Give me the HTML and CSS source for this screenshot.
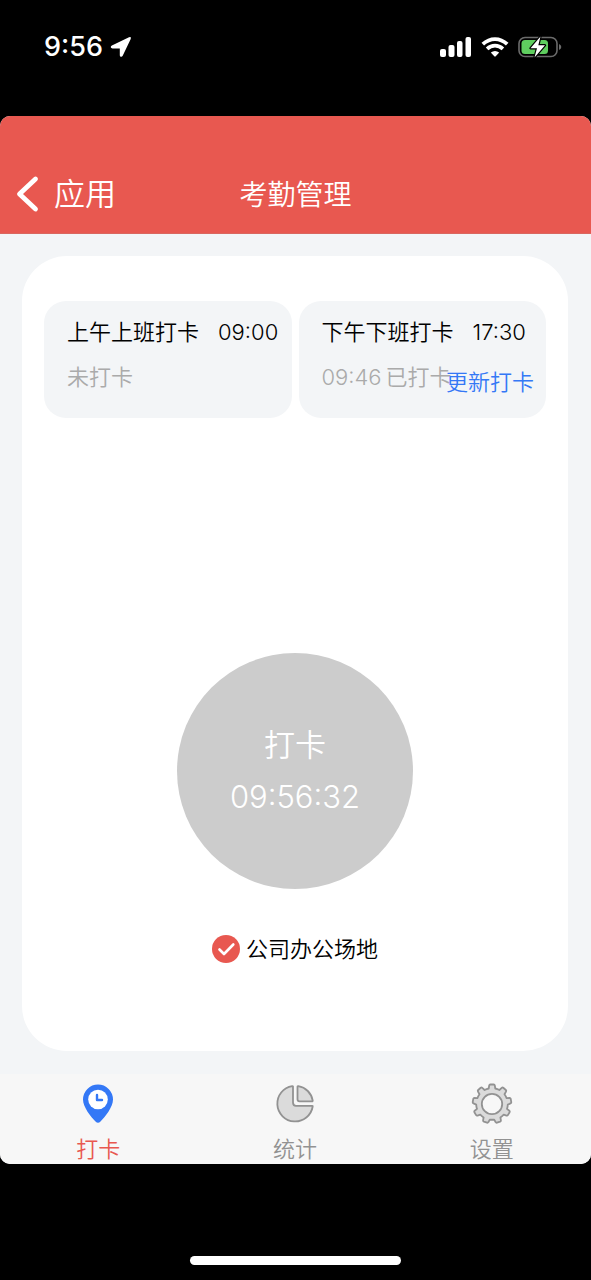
FILE: index.html
```html
<!DOCTYPE html>
<html lang="zh-CN">
<head>
<meta charset="utf-8">
<meta name="viewport" content="width=device-width, initial-scale=1">
<title>考勤管理</title>
<link rel="stylesheet" href="styles.css">
</head>
<body class="phone">
<div class="status">
  <div class="status-left">
    <span class="status-time">9:56</span>
    <svg width="22" height="22" viewBox="0 0 22 22" aria-hidden="true"><path d="M19 1.200Q21.600 .2 20.700 2.900L12.700 19.800Q11.900 21.200 10.700 20.700Q9.800 20.300 9.800 19.200V12.400H2.500Q1 12.300 .8 11.200Q.6 10.100 1.900 9.400z" fill="#fff"/></svg>
  </div>
  <div class="status-right">
    <svg width="32" height="20" viewBox="0 0 32 20" aria-hidden="true" fill="#fff"><rect x="0" y="12" width="6" height="8" rx="2"/><rect x="8.500" y="8" width="6" height="12" rx="2"/><rect x="17" y="4" width="5.500" height="16" rx="2"/><rect x="25.500" y="0" width="5.500" height="20" rx="2"/></svg>
    <svg width="28" height="20" viewBox="0 0 28 20" aria-hidden="true"><g fill="none" stroke="#fff" stroke-width="3.800"><path d="M1.800 7.200Q7.300 2.100 14 2.100T26.200 7.200"/><path d="M6.100 11.800Q9.600 8.600 14 8.600T21.900 11.800"/></g><path d="M9.800 15.600Q14 12.200 18.200 15.600L14.700 19.300Q14 20 13.300 19.300z" fill="#fff"/></svg>
    <svg width="44" height="24" viewBox="0 0 44 24" aria-hidden="true"><rect x="1" y="2.500" width="38" height="19" rx="6" fill="none" stroke="#6b6b6b" stroke-width="1.600"/><path d="M41 9Q43.300 10 43.300 12T41 15z" fill="#6b6b6b"/><rect x="3.500" y="5" width="26.500" height="14" rx="3.500" fill="#5fce5f"/><path d="M22.500 1.500L12.500 13.200H19L16.500 22.500L27 10.300H20.300z" fill="#fff" stroke="#000" stroke-width="2.400" stroke-linejoin="round" paint-order="stroke"/></svg>
  </div>
</div>
<div class="app">
  <header class="header">
    <button class="back" type="button">
      <svg width="24" height="38" viewBox="0 0 24 38" aria-hidden="true"><path d="M19.500 4L3.500 19L19.500 34" fill="none" stroke="#fff" stroke-width="4.800" stroke-linecap="round" stroke-linejoin="round"/></svg>
      <span>应用</span>
    </button>
    <h1 class="title">考勤管理</h1>
  </header>
  <main class="main">
    <section class="card">
      <div class="shifts">
        <article class="shift">
          <p class="shift-head"><span>上午上班打卡</span><time>09:00</time></p>
          <p class="shift-state">未打卡</p>
        </article>
        <article class="shift">
          <p class="shift-head"><span>下午下班打卡</span><time>17:30</time></p>
          <p class="shift-state"><time>09:46</time><span>已打卡</span></p>
          <button class="update" type="button">更新打卡</button>
        </article>
      </div>
      <div class="punch-area">
        <button class="punch" type="button"><span class="punch-label">打卡</span><time class="punch-time">09:56:32</time></button>
        <label class="place">
          <span class="tick"><input class="tick-box" type="checkbox" checked><svg class="tick-mark" width="28" height="28" viewBox="0 0 28 28" aria-hidden="true"><path d="M7.500 14.500L12 19L21.300 9.500" fill="none" stroke="#fff" stroke-width="2.600" stroke-linecap="round" stroke-linejoin="round"/></svg></span>
          <span>公司办公场地</span>
        </label>
      </div>
    </section>
  </main>
  <nav class="tabs">
    <a class="tab tab-active" href="#punch">
      <svg width="42" height="42" viewBox="0 0 42 42" aria-hidden="true"><path d="M21 1.500A15 15 0 0 0 6 16.500C6 24 14 34 18.500 38.500Q21 41 23.500 38.500C28 34 36 24 36 16.500A15 15 0 0 0 21 1.500z" fill="#3478f6"/><circle cx="21" cy="16.500" r="9.800" fill="#fff"/><path d="M20 12V17H25" fill="none" stroke="#3478f6" stroke-width="2.400" stroke-linecap="round" stroke-linejoin="round"/></svg>
      <span>打卡</span>
    </a>
    <a class="tab" href="#stats">
      <svg width="42" height="42" viewBox="0 0 42 42" aria-hidden="true" fill="#dbdbdb" stroke="#929292" stroke-width="1.800" stroke-linejoin="round"><path d="M19 3.600Q19 3 18.200 3.100A17.800 17.800 0 1 0 38.700 23.500Q38.800 22.800 38 22.800H22Q19 22.800 19 19.500z"/><path d="M23.500 3.800Q23.500 3 24.300 3.100A17.600 17.600 0 0 1 38.700 17.500Q38.800 18.300 38 18.300H25.500Q23.500 18.300 23.500 16.300z"/></svg>
      <span>统计</span>
    </a>
    <a class="tab" href="#settings">
      <svg width="42" height="42" viewBox="-21 -21 42 42" aria-hidden="true" fill="#dbdbdb" stroke="#929292" stroke-width="1.800" stroke-linejoin="round"><path d="M-3.300-15.500L-2.800-18.500Q-2.600-19.500-1.700-19.500H1.700Q2.600-19.500 2.800-18.500L3.300-15.500A15.800 15.800 0 0 1 7.400-14L9.700-16.100Q10.500-16.800 11.300-16.200L13.800-14Q14.500-13.300 14-12.400L12.500-9.700A15.800 15.800 0 0 1 14.600-5.900L17.600-6.100Q18.500-6.100 18.700-5.200L19.300-1.900Q19.400-.9 18.500-.6L15.800 .6A15.800 15.800 0 0 1 15 4.900L17.300 6.800Q18 7.400 17.600 8.200L15.900 11.100Q15.400 11.900 14.500 11.600L11.700 10.600A15.800 15.800 0 0 1 8.400 13.400L8.900 16.300Q9 17.200 8.100 17.600L5 18.700Q4.100 19 3.700 18.200L2.200 15.600A15.800 15.800 0 0 1-2.200 15.600L-3.700 18.200Q-4.100 19-5 18.700L-8.100 17.600Q-9 17.200-8.900 16.300L-8.400 13.400A15.800 15.800 0 0 1-11.700 10.600L-14.500 11.600Q-15.400 11.900-15.900 11.100L-17.600 8.200Q-18 7.400-17.300 6.800L-15 4.900A15.800 15.800 0 0 1-15.800 .6L-18.500-.6Q-19.400-.9-19.300-1.900L-18.700-5.200Q-18.500-6.100-17.600-6.100L-14.600-5.900A15.800 15.800 0 0 1-12.500-9.700L-14-12.400Q-14.500-13.300-13.800-14L-11.300-16.200Q-10.500-16.800-9.700-16.100L-7.400-14A15.800 15.800 0 0 1-3.300-15.500z"/><circle r="10.200" fill="#f7f7f7"/></svg>
      <span>设置</span>
    </a>
  </nav>
</div>
<footer class="home"><div class="home-bar"></div></footer>
</body>
</html>
```

FILE: styles.css
```css
* {
  box-sizing: border-box;
}

.phone {
  margin: 0;
  min-height: 100vh;
  display: flex;
  flex-direction: column;
  background: #000;
  font-family: Inter, "Noto Sans CJK SC DemiLight", "Noto Sans CJK SC", sans-serif;
  font-size: 22px;
  line-height: 32px;
  font-weight: 350;
  color: #000;
}

button {
  font: inherit;
  border: 0;
  padding: 0;
  background: none;
  cursor: pointer;
}

p,
h1 {
  margin: 0;
  font-weight: inherit;
}

.status {
  height: 116px;
  padding: 31px 29px 0 44px;
  display: flex;
  align-items: flex-start;
  justify-content: space-between;
  color: #fff;
}

.status-left,
.status-right {
  display: flex;
  align-items: center;
  height: 32px;
}

.status-left {
  gap: 7px;
}

.status-right {
  gap: 9px;
}

.status-time {
  font-size: 27px;
  font-weight: 500;
}

.app {
  flex: 1;
  display: flex;
  flex-direction: column;
  overflow: hidden;
  border-radius: 10px;
  background: #f3f5f7;
}

.header {
  height: 118px;
  padding: 38px 16px 0;
  display: grid;
  grid-template-columns: 1fr auto 1fr;
  align-items: center;
  background: #e85850;
  border-bottom: 1px solid #d9675f;
  color: #fff;
}

.back {
  display: flex;
  align-items: center;
  gap: 14px;
  color: inherit;
  font-size: 31px;
}

.title {
  padding-top: 2px;
  font-size: 28px;
}

.main {
  flex: 1;
  display: flex;
  padding: 22px 23px 23px 22px;
}

.card {
  flex: 1;
  display: flex;
  flex-direction: column;
  padding: 45px 22px 86px;
  border-radius: 45px;
  background: #fff;
}

.shifts {
  display: grid;
  grid-template-columns: 1fr 1fr;
  gap: 7px;
}

.shift {
  position: relative;
  height: 117px;
  padding: 15px 12px 0 23px;
  border-radius: 22px;
  background: #f3f5f7;
  white-space: nowrap;
}

.shift-head {
  display: flex;
  gap: 19px;
}

.shift-state {
  display: flex;
  gap: 4px;
  margin-top: 13px;
  color: #aaa;
}

.update {
  position: absolute;
  right: 12px;
  bottom: 20px;
  color: #3478f6;
}

.punch-area {
  flex: 1;
  display: flex;
  flex-direction: column;
  align-items: center;
  justify-content: flex-end;
  gap: 44px;
}

.punch {
  width: 236px;
  height: 236px;
  display: flex;
  flex-direction: column;
  align-items: center;
  justify-content: center;
  gap: 8px;
  border-radius: 50%;
  background: #ccc;
  color: #fff;
  font-size: 31px;
  line-height: 44px;
}

.place {
  display: flex;
  align-items: center;
  gap: 6px;
}

.tick {
  display: grid;
}

.tick-box,
.tick-mark {
  grid-area: 1 / 1;
}

.tick-box {
  appearance: none;
  width: 28px;
  height: 28px;
  margin: 0;
  border-radius: 50%;
  background: #e85850;
}

.tick-mark {
  z-index: 1;
  pointer-events: none;
}

.tabs {
  height: 90px;
  padding: 9px 1px 0 0;
  display: grid;
  grid-template-columns: repeat(3, 1fr);
  background: #f7f7f7;
}

.tab {
  display: flex;
  flex-direction: column;
  align-items: center;
  gap: 8px;
  color: #929292;
  text-decoration: none;
}

.tab-active {
  color: #e85850;
}

.home {
  height: 116px;
  padding-bottom: 15px;
  display: flex;
  align-items: flex-end;
  justify-content: center;
}

.home-bar {
  width: 211px;
  height: 9px;
  border-radius: 5px;
  background: #fff;
}
```
